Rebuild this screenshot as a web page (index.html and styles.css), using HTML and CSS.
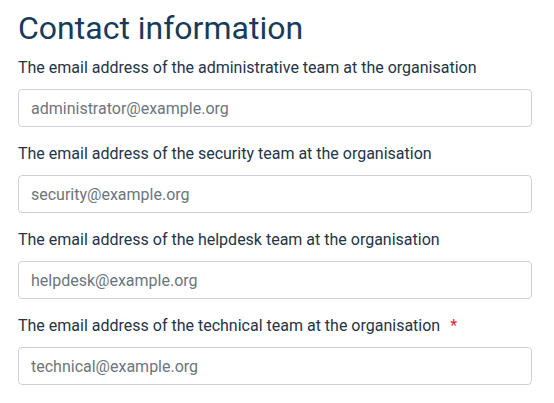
FILE: index.html
```html
<!DOCTYPE html>
<html lang="en">

<head>
    <meta charset="UTF-8">
    <meta name="viewport" content="width=device-width, initial-scale=1.0">
    <title>Contact information</title>
    <link rel="stylesheet" href="styles.css">
</head>

<body>
    <div class="contactForm">
        <h1>Contact information</h1>

        <div class="formGroup">
            <label for="adminEmail">The email address of the administrative team at the organisation</label>
            <input type="text" id="adminEmail" placeholder="administrator@example.org">
        </div>

        <div class="formGroup">
            <label for="securityEmail">The email address of the security team at the organisation</label>
            <input type="text" id="securityEmail" placeholder="security@example.org">
        </div>

        <div class="formGroup">
            <label for="helpdeskEmail">The email address of the helpdesk team at the organisation</label>
            <input type="text" id="helpdeskEmail" placeholder="helpdesk@example.org">
        </div>

        <div class="formGroup">
            <label for="technicalEmail">The email address of the technical team at the organisation <span class="required">*</span></label>
            <input type="text" id="technicalEmail" placeholder="technical@example.org">
        </div>
    </div>
</body>

</html>
```

FILE: styles.css
```css
body {
    margin: 0;
    background: #ffffff;
    font-family: Roboto, "Liberation Sans", sans-serif;
    color: #243447;
}

.contactForm {
    padding: 0 22px 0 18px;
}

h1 {
    color: #183b5a;
    font-size: 32px;
    font-weight: 400;
    line-height: 38px;
    margin: 9px 0 10px 0;
}

.formGroup {
    margin-bottom: 16px;
}

label {
    display: block;
    font-size: 16px;
    line-height: 22px;
    margin-bottom: 10px;
}

.required {
    color: #e3263b;
    margin-left: 6px;
}

input[type=text] {
    display: block;
    box-sizing: border-box;
    width: 100%;
    height: 38px;
    padding: 0 12px;
    border: 1px solid #cdd1d9;
    border-radius: 4px;
    font-family: Roboto, "Liberation Sans", sans-serif;
    font-size: 16px;
    color: #243447;
    background: #ffffff;
}

input[type=text]::placeholder {
    color: #6c757d;
}
```
